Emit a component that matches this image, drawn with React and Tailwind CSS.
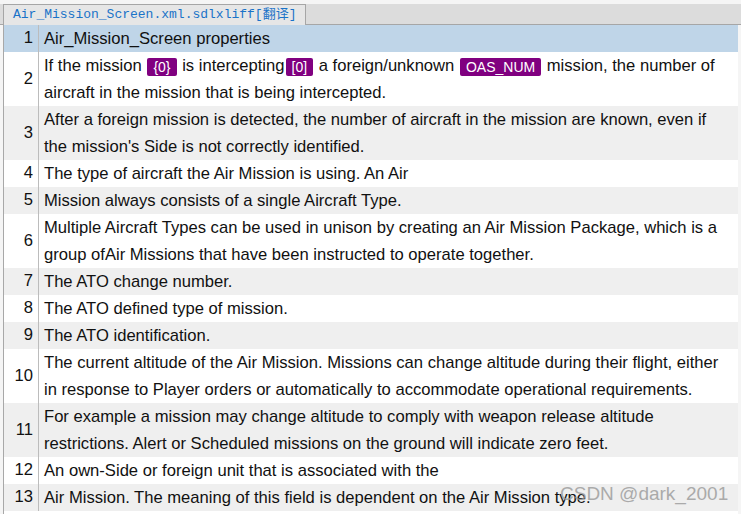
import React from "react";

const Tag = ({ children }) => (
  <span className="inline-block mx-[1px] bg-[#800080] text-white text-[14px] leading-[18px] px-[6px] rounded-[2px] align-[-1px]">
    {children}
  </span>
);

const rows = [
  { n: 1, lines: ["Air_Mission_Screen properties"], bg: "bg-[#bfd5e8]" },
  {
    n: 2,
    lines: [
      <>
        If the mission <Tag>{"{0}"}</Tag> is intercepting<Tag>[0]</Tag> a foreign/unknown <Tag>OAS_NUM</Tag> mission, the number of
      </>,
      "aircraft in the mission that is being intercepted.",
    ],
    bg: "bg-white",
  },
  {
    n: 3,
    lines: [
      "After a foreign mission is detected, the number of aircraft in the mission are known, even if",
      "the mission's Side is not correctly identified.",
    ],
    bg: "bg-[#efefef]",
  },
  { n: 4, lines: ["The type of aircraft the Air Mission is using. An Air"], bg: "bg-white" },
  { n: 5, lines: ["Mission always consists of a single Aircraft Type."], bg: "bg-[#efefef]" },
  {
    n: 6,
    lines: [
      "Multiple Aircraft Types can be used in unison by creating an Air Mission Package, which is a",
      "group ofAir Missions that have been instructed to operate together.",
    ],
    bg: "bg-white",
  },
  { n: 7, lines: ["The ATO change number."], bg: "bg-[#efefef]" },
  { n: 8, lines: ["The ATO defined type of mission."], bg: "bg-white" },
  { n: 9, lines: ["The ATO identification."], bg: "bg-[#efefef]" },
  {
    n: 10,
    lines: [
      "The current altitude of the Air Mission. Missions can change altitude during their flight, either",
      "in response to Player orders or automatically to accommodate operational requirements.",
    ],
    bg: "bg-white",
  },
  {
    n: 11,
    lines: [
      "For example a mission may change altitude to comply with weapon release altitude",
      "restrictions. Alert or Scheduled missions on the ground will indicate zero feet.",
    ],
    bg: "bg-[#efefef]",
  },
  { n: 12, lines: ["An own-Side or foreign unit that is associated with the"], bg: "bg-white" },
  { n: 13, lines: ["Air Mission. The meaning of this field is dependent on the Air Mission type."], bg: "bg-[#efefef]" },
];

export default function App() {
  return (
    <div className="relative w-[741px] h-[514px] overflow-hidden bg-[#f5f5f5] font-['Liberation_Sans',Arial,sans-serif] text-[#111]">
      <div className="h-[4px]" />
      <div className="flex h-[21px] bg-[#dcdcdc] border-b border-[#a6a6a6]">
        <div className="ml-[3px] w-[303px] h-[21px] border-l border-t border-r border-[#a6a6a6] bg-[#e6e6e6] pl-[9px] text-[13px] leading-[19px] text-[#1a73c8] font-['Liberation_Mono','Noto_Sans_CJK_SC',monospace] whitespace-nowrap">
          Air_Mission_Screen.xml.sdlxliff[翻译]
        </div>
      </div>
      <div className="ml-[3px] w-[735px] h-[489px] border-l border-[#a8a8a8] bg-white">
        {rows.map((r) => (
          <div key={r.n} className={`flex ${r.bg}`}>
            <div className="w-[35px] shrink-0 flex items-center justify-end pr-[5px] border-r border-[#bcbcbc] text-[16.6px]">
              {r.n}
            </div>
            <div className="pl-[5px] text-[16.6px] leading-[27px] whitespace-nowrap">
              {r.lines.map((l, i) => (
                <div key={i}>{l}</div>
              ))}
            </div>
          </div>
        ))}
      </div>
      <div className="absolute left-[560px] top-[482px] text-[19px] leading-[24px] text-[#9a9a9a] opacity-80 whitespace-nowrap">
        CSDN @dark_2001
      </div>
    </div>
  );
}
